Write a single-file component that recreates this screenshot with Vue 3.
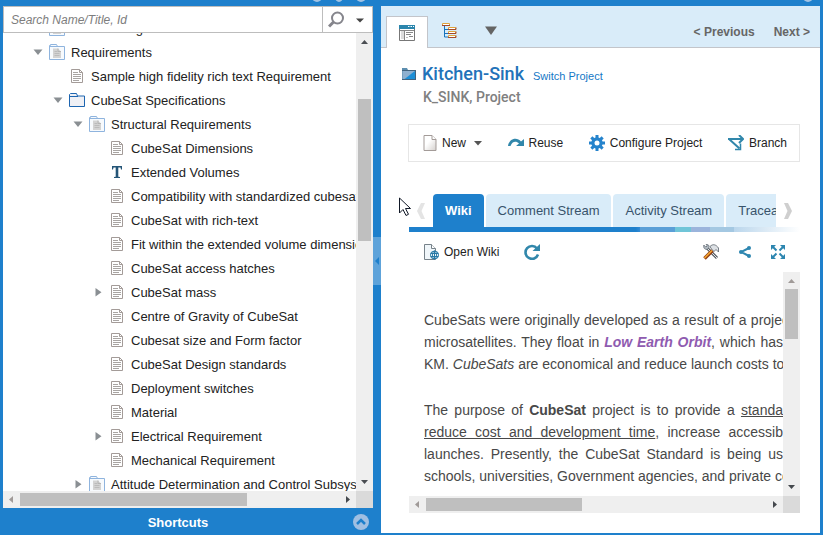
<script setup>
import { ref } from 'vue'

const rows = [
  { level: 0, icon: 'docfolder', text: 'User Testing' },
  { level: 0, icon: 'docfolder', text: 'Requirements', arrow: 'down' },
  { level: 1, icon: 'doc', text: 'Sample high fidelity rich text Requirement' },
  { level: 1, icon: 'folder', text: 'CubeSat Specifications', arrow: 'down' },
  { level: 2, icon: 'docfolder', text: 'Structural Requirements', arrow: 'down' },
  { level: 3, icon: 'doc', text: 'CubeSat Dimensions' },
  { level: 3, icon: 'letter', text: 'Extended Volumes' },
  { level: 3, icon: 'doc', text: 'Compatibility with standardized cubesat' },
  { level: 3, icon: 'doc', text: 'CubeSat with rich-text' },
  { level: 3, icon: 'doc', text: 'Fit within the extended volume dimensions' },
  { level: 3, icon: 'doc', text: 'CubeSat access hatches' },
  { level: 3, icon: 'doc', text: 'CubeSat mass', arrow: 'right' },
  { level: 3, icon: 'doc', text: 'Centre of Gravity of CubeSat' },
  { level: 3, icon: 'doc', text: 'Cubesat size and Form factor' },
  { level: 3, icon: 'doc', text: 'CubeSat Design standards' },
  { level: 3, icon: 'doc', text: 'Deployment switches' },
  { level: 3, icon: 'doc', text: 'Material' },
  { level: 3, icon: 'doc', text: 'Electrical Requirement', arrow: 'right' },
  { level: 3, icon: 'doc', text: 'Mechanical Requirement' },
  { level: 2, icon: 'docfolder', text: 'Attitude Determination and Control Subsystem', arrow: 'right' }
]
const tabs = ['Wiki', 'Comment Stream', 'Activity Stream', 'Traceability']
const active = ref('Wiki')
const query = ref('')
</script>

<template>
  <svg class="defs" aria-hidden="true">
    <linearGradient id="paper" x1="0" y1="0" x2="1" y2="1"><stop offset=".4" stop-color="#fff" /><stop offset="1" stop-color="#d4d0cd" /></linearGradient>
    <symbol id="doc" viewBox="0 0 16 16">
      <path d="M2.500 1.500h8l3 3v10h-11z" fill="#fff" stroke="#a39b98" />
      <path d="M10.500 1.500v3h3" fill="none" stroke="#a39b98" />
      <path d="M4 4.500h5M4 6.500h8M4 8.500h8M4 10.500h8M4 12.500h6" stroke="#a8a4a2" />
    </symbol>
    <symbol id="docfolder" viewBox="0 0 16 16">
      <path d="M.5 15.500v-14h1v-1h6l1 2h7v13z" fill="#f7fafd" stroke="#8fb4de" />
      <path d="M1 2.500h8" stroke="#8fb4de" />
      <path d="M4 4.500h5l3 3v6.500h-8z" fill="#d3d3d3" />
      <path d="M5.500 7.500h3M5.500 9.500h5M5.500 11.500h5" stroke="#bbb" />
      <path d="M9 4.500v3h3" fill="none" stroke="#b5b5b5" />
    </symbol>
    <symbol id="folder" viewBox="0 0 16 16">
      <path d="M.5 14.500v-12l1-1h6l1 2.500h7v10.500z" fill="#eff0f5" stroke="#1d65b0" />
      <path d="M1 4.500h8" stroke="#1d65b0" />
    </symbol>
    <symbol id="letter" viewBox="0 0 16 16">
      <path d="M3 2h10v3.500h-1l-.5-2H9.300v9.200l1.700.3v1H5v-1l1.700-.3V3.500H4.500l-.5 2H3z" fill="#245577" />
    </symbol>
  </svg>

  <div class="app">
    <div class="strip">
      <span class="dot"></span><span class="dot small"></span><span class="dot"></span>
      <span class="dot last"></span>
    </div>

    <aside class="side">
      <form class="search" @submit.prevent>
        <input v-model="query" type="text" placeholder="Search Name/Title, Id" aria-label="Search Name/Title, Id">
        <button type="submit" aria-label="Search">
          <svg width="36" height="18" viewBox="0 0 36 18">
            <circle cx="9.500" cy="7" r="5.500" fill="none" stroke="#85858c" stroke-width="2" />
            <path d="M5.500 11L1 15.500" stroke="#85858c" stroke-width="3" />
            <path d="M28 7.500h8l-4 4z" fill="#444" />
          </svg>
        </button>
      </form>
      <div class="scroller">
        <ul class="tree">
          <li v-for="r in rows" :key="r.text" :class="'l' + r.level">
            <svg class="arrow" width="10" height="10" viewBox="0 0 10 10">
              <path v-if="r.arrow === 'down'" d="M.5 2.500h9L5 8z" fill="#8a8f93" />
              <path v-if="r.arrow === 'right'" d="M2.500 1v8.500L8.500 5.200z" fill="#8a8f93" />
            </svg>
            <svg width="16" height="16"><use :href="'#' + r.icon" /></svg>
            <span>{{ r.text }}</span>
          </li>
        </ul>
        <div class="bar v">
          <svg width="17" height="17"><path d="M5 11h7L8.500 7z" fill="#4a4d52" /></svg>
          <div class="track tree-v"><i></i></div>
          <svg width="17" height="17"><path d="M5 6h7L8.500 10z" fill="#4a4d52" /></svg>
        </div>
        <div class="bar h">
          <svg width="17" height="17"><path d="M10 5v7L6 8.500z" fill="#a09a98" /></svg>
          <div class="track tree-h"><i></i></div>
          <svg width="17" height="17"><path d="M7 5v7l4-3.500z" fill="#44484d" /></svg>
        </div>
        <div class="corner"></div>
      </div>
      <button class="shortcuts" type="button">
        <span>Shortcuts</span>
        <svg width="16" height="16" viewBox="0 0 16 16"><circle cx="8" cy="8" r="8" fill="#a0bfe2" /><path d="M4 10l4-4 4 4" fill="none" stroke="#1e80cc" stroke-width="2.500" /></svg>
      </button>
    </aside>

    <div class="gutter">
      <button type="button" aria-label="Collapse panel">
        <svg width="8" height="10"><path d="M6 1v8L2 5z" fill="#1e80cc" /></svg>
      </button>
    </div>

    <main class="main">
      <nav class="views">
        <button class="view on" type="button" aria-label="Overview">
          <svg width="16" height="16" viewBox="0 0 16 16">
            <path d="M.5 1v14.500h15V1z" fill="#fff" stroke="#777" /><path d="M0 0h16v4H0z" fill="#2b86ad" />
            <path d="M9 1.500h1.500M11.500 1.500H13M14 1.500h1" stroke="#fff" />
            <path d="M2 6h3v8H2z" fill="#ddd" /><path d="M5.500 5v10M1 5.500h14M7 7.500h7M7 9.500h5M10 11.500h4" stroke="#888" /><path d="M7 12.500h2" stroke="#bbb" />
          </svg>
        </button>
        <button class="view" type="button" aria-label="Tree view">
          <svg width="16" height="16" viewBox="0 0 16 16">
            <path d="M3.500 3v11h4M3.500 6.500h4M3.500 10.500h4" fill="none" stroke="#1673bd" />
            <path d="M1.500.5h7v2h-7zM7.500 4.500h7v2h-7zM7.500 8.500h7v2h-7zM7.500 12.500h7v2h-7z" fill="#fff" stroke="#e0a33c" />
            <path d="M1 2.500h8M7 6.500h8v-2M7 10.500h8v-2M7 14.500h8v-2" fill="none" stroke="#a34a2c" />
          </svg>
        </button>
        <button class="view" type="button" aria-label="More views">
          <svg width="14" height="12"><path d="M1 1.500h12L7 10z" fill="#646464" /></svg>
        </button>
        <a class="step" href="#">&lt; Previous</a>
        <a class="step" href="#">Next &gt;</a>
      </nav>

      <header class="head">
        <div class="title">
          <svg width="14" height="14" viewBox="0 0 14 14"><path d="M0 1h5l1 2h7.500v9.500H0z" fill="#5d8eaf" /><path d="M.5 3.500h12.500v8.500H.5z" fill="#8fb0cf" /><path d="M13.500 3.500v9H2z" fill="#1d8fd6" /><path d="M0 12.500h14M13.500 3v9M0 3.500h14" stroke="#43637d" /></svg>
          <h1>Kitchen-Sink</h1>
          <a href="#">Switch Project</a>
        </div>
        <p>K_SINK, Project</p>
      </header>

      <div class="actions">
        <button type="button">
          <svg width="14" height="16"><path d="M1 .5h8l4 4v11H1z" fill="url(#paper)" stroke="#a39b98" /><path d="M9 .5v4h4" fill="#fff" stroke="#a39b98" /></svg>
          New
          <svg class="caret" width="8" height="5"><path d="M0 0h8L4 4.500z" fill="#555" /></svg>
        </button>
        <button type="button">
          <svg width="16" height="16" viewBox="0 0 16 16"><path d="M0 11C1 3.500 9 1.500 13 6.500L16 4v7H8l3-2.500C8 5.500 4 6.500 2.500 11z" fill="#3187ab" /></svg>
          Reuse
        </button>
        <button type="button">
          <svg width="16" height="16" viewBox="-8 -8 16 16"><g fill="#2583cc"><path v-for="n in 4" :key="n" d="M-1.500-8h3v16h-3z" :transform="'rotate(' + n * 45 + ')'" /><circle r="5.700" /></g><circle r="2.500" fill="#fff" /></svg>
          Configure Project
        </button>
        <button type="button">
          <svg width="16" height="16" viewBox="0 0 16 16"><path d="M0 4h14M1 4l10.500 9.500M11 0l4 4-4 4" fill="none" stroke="#3187ab" stroke-width="2" /><path d="M12.500 8.500v6H7" fill="none" stroke="#3187ab" stroke-width="1.500" /></svg>
          Branch
        </button>
      </div>

      <div class="tabrow">
        <button class="chev" type="button" aria-label="Scroll tabs left"><svg width="10" height="16"><path d="M5 0h4L5.500 8 9 16H5L1 8z" fill="#e4e4e4" /></svg></button>
        <div class="tabs" role="tablist">
          <button v-for="t in tabs" :key="t" type="button" role="tab" :aria-selected="active === t" :class="{ on: active === t }" @click="active = t">{{ t }}</button>
        </div>
        <button class="chev" type="button" aria-label="Scroll tabs right"><svg width="10" height="16"><path d="M1 0h4l4 8-4 8H1l3.500-8z" fill="#cfcfcf" /></svg></button>
      </div>
      <div class="rule"></div>

      <div class="tools">
        <button type="button">
          <svg width="15" height="16" viewBox="0 0 15 16"><path d="M.5.5h7l4 4v11H.5z" fill="#f0f6fa" stroke="#77828a" /><path d="M7.500.5v4h4" fill="#fff" stroke="#77828a" /><circle cx="10.500" cy="11" r="4" fill="#fff" stroke="#2779a6" /><ellipse cx="10.500" cy="11" rx="2" ry="4" fill="none" stroke="#2779a6" /><path d="M6.500 9.500h8M6.500 12.500h8M10.500 7v8" stroke="#2779a6" /></svg>
          Open Wiki
        </button>
        <button type="button" aria-label="Refresh">
          <svg width="16" height="16" viewBox="0 0 16 16"><path d="M13 4.500A6.400 6.400 0 1 0 14 10.500" fill="none" stroke="#3187ab" stroke-width="2.600" /><path d="M16 0v7H8.500z" fill="#3187ab" /></svg>
        </button>
        <button class="push" type="button" aria-label="Configure">
          <svg width="16" height="16" viewBox="0 0 16 16"><path d="M3 3l11 11" stroke="#5b6066" stroke-width="3" /><path d="M4 4l10 10" stroke="#e4e7ea" /><path d="M.8 1l2 2 1.500-1L3 0c3 0 4 3 2 5C3 6 0 5 .8 1z" fill="#b4bdc5" stroke="#59616a" stroke-width=".7" /><path d="M1.500 14.500l8-8" stroke="#8e3d16" stroke-width="3.600" /><path d="M1.500 14L9 6.500" stroke="#f5a52f" stroke-width="1.600" /><path d="M7 2.500c3-3 6-2 8.500 1.500V8l-2.500-2.500L11 7.500 8.500 5z" fill="#dde1e5" stroke="#59616a" stroke-width=".8" /></svg>
        </button>
        <button type="button" aria-label="Share">
          <svg width="12" height="12" viewBox="0 0 12 12"><path d="M10 2L2 6l8 4" fill="none" stroke="#2d86b0" stroke-width="2" /><g fill="#2d86b0"><circle cx="2" cy="6" r="2" /><circle cx="10" cy="2" r="2" /><circle cx="10" cy="10" r="2" /></g></svg>
        </button>
        <button type="button" aria-label="Full screen">
          <svg width="14" height="14" viewBox="0 0 14 14"><path d="M0 0h5L0 5zM14 0v5L9 0zM0 14V9l5 5zM14 14H9l5-5z" fill="#2d86b0" /><path d="M1 1l4.500 4.500M13 1L8.500 5.500M1 13l4.500-4.500M13 13L8.500 8.500" stroke="#2d86b0" stroke-width="2" /></svg>
        </button>
      </div>

      <div class="scroller wiki">
        <article>
          <p>
            <span class="past">CubeSats were originally developed as a result of a projec</span>
            <span>microsatellites. They float in <a href="#">Low Earth Orbit</a>, which has</span>
            <span>KM. <em>CubeSats</em> are economical and reduce launch costs to</span>
          </p>
          <p>
            <span>The purpose of <b>CubeSat</b> project is to provide a <u>standa</u></span>
            <span><u>reduce cost and development time</u>, increase accessib</span>
            <span>launches. Presently, the CubeSat Standard is being us</span>
            <span class="past">schools, universities, Government agencies, and private co</span>
          </p>
        </article>
        <div class="bar v">
          <svg width="17" height="17"><path d="M5 11h7L8.500 7z" fill="#a09a98" /></svg>
          <div class="track wiki-v"><i></i></div>
          <svg width="17" height="17"><path d="M5 6h7L8.500 10z" fill="#44484d" /></svg>
        </div>
        <div class="bar h">
          <svg width="17" height="17"><path d="M10 5v7L6 8.500z" fill="#a09a98" /></svg>
          <div class="track wiki-h"><i></i></div>
          <svg width="17" height="17"><path d="M7 5v7l4-3.500z" fill="#44484d" /></svg>
        </div>
        <div class="corner"></div>
      </div>
    </main>

    <svg class="pointer" width="13" height="20" viewBox="0 0 13 20"><path d="M.5 1v15l3.500-3.500 3 6 2.500-1.200-3-5.800h5z" fill="#fff" stroke="#111827" /></svg>
  </div>
</template>

<style>
body { margin: 0; background: #1e80cc; }
</style>

<style scoped>
.defs { position: absolute; width: 0; height: 0; }
.app {
  position: relative;
  display: grid;
  grid-template: 6px minmax(0, 1fr) / minmax(0, 370fr) 8px minmax(0, 439fr);
  box-sizing: border-box;
  height: 100vh;
  padding: 0 3px;
  overflow: hidden;
  background: #1e80cc;
  font-family: "Liberation Sans", Arial, sans-serif;
  font-size: 12px;
  color: #222;
}
button { padding: 0; border: 0; background: none; font: inherit; color: inherit; }
a { text-decoration: none; }
svg { flex: none; display: block; }
.strip { grid-column: 1 / -1; display: flex; align-items: flex-end; gap: 13px; padding: 0 7px 4px 309px; height: 2px; overflow: hidden; }
.dot { flex: none; width: 10px; height: 10px; border-radius: 50%; background: #a3c3e4; }
.dot.small { width: 8px; }
.dot.last { margin-left: auto; }

.side { display: flex; flex-direction: column; min-height: 0; }
.search { display: flex; box-sizing: border-box; height: 27px; border: 1px solid #bdbdbd; background: #fff; }
.search input { flex: 1; min-width: 0; padding: 0 7px; border: 0; outline: 0; background: none; font: italic 12px "Liberation Sans", Arial, sans-serif; }
.search input::placeholder { color: #7d7d7d; opacity: 1; }
.search button { display: flex; align-items: center; width: 50px; padding-left: 5px; border-left: 1px solid #bdbdbd; }

.scroller { flex: 1; display: grid; grid-template: minmax(0, 1fr) 17px / minmax(0, 1fr) 17px; min-height: 0; background: #fff; }
.tree { margin: 0; padding: 0; overflow: hidden; list-style: none; font-size: 13px; }
.tree li { display: flex; align-items: center; gap: 6px; height: 24px; padding-left: 30px; white-space: nowrap; }
.tree li:first-child { margin-top: -17px; }
.tree .l1 { padding-left: 50px; }
.tree .l2 { padding-left: 70px; }
.tree .l3 { padding-left: 90px; }
.bar { display: flex; background: #efefef; }
.bar.v { flex-direction: column; }
.track { flex: 1; display: grid; min-width: 0; min-height: 0; }
.track i { background: #bfbfbf; }
.v .track { padding: 0 2px; }
.h .track { padding: 2px 0; }
.tree-v { grid-template-rows: 49fr 142fr 233fr; }
.tree-v i { grid-row: 2; }
.tree-h { grid-template-columns: 227fr 92fr; }
.wiki-v { grid-template-rows: 50fr 140fr; }
.wiki-h { grid-template-columns: 156fr 184fr; }
.corner { background: #dadada; }
.shortcuts { display: flex; align-items: center; height: 27px; padding: 0 4px 0 0; color: #fff; font-weight: bold; font-size: 13px; }
.shortcuts span { flex: 1; padding-top: 2px; text-align: center; }

.gutter { display: flex; align-items: center; }
.gutter button { width: 8px; height: 48px; margin-bottom: 19px; background: #5ea3da; }

.main { display: flex; flex-direction: column; min-height: 0; margin-bottom: 2px; padding-bottom: 20px; box-sizing: border-box; background: #fff; }
.views { display: flex; align-items: flex-end; height: 41px; padding: 0 10px 0 5px; border-bottom: 1px solid #c3c5ca; background: #d9ecf9; }
.view { display: flex; align-items: center; justify-content: center; width: 42px; height: 32px; box-sizing: border-box; }
.view.on { margin-bottom: -1px; border: 1px solid #c3c5ca; border-bottom: 0; background: #fff; }
.step { margin-bottom: 8px; font-weight: bold; line-height: 14px; color: #666; }
.step:first-of-type { margin: 0 19px 8px auto; }

.head { padding: 14px 21px 0; font-family: Roboto, sans-serif; }
.title { display: flex; align-items: center; gap: 6px; }
.title h1 { margin: 0; font-size: 18px; line-height: 24px; font-weight: 500; color: #2272b9; }
.title a { margin: 4px 0 0 3px; font: 11px/14px "Liberation Sans", Arial, sans-serif; color: #1478c6; }
.head p { margin: 2px 0 0 21px; font-size: 14px; line-height: 18px; font-weight: 500; color: #808080; }

.actions { display: flex; align-items: center; justify-content: space-between; box-sizing: border-box; height: 38px; margin: 18px 20px 0 27px; padding: 0 12px 0 14px; border: 1px solid #e6e6e6; }
.actions button, .tools button { display: flex; align-items: center; gap: 5px; }
.caret { margin-left: 3px; }
.tabrow { display: flex; height: 33px; margin: 32px 20px 0 28px; }
.chev { display: flex; align-items: center; justify-content: center; width: 24px; }
.tabs { flex: 1; display: flex; gap: 2px; min-width: 0; overflow: hidden; }
.tabs button { flex: none; padding: 0 12px; border-radius: 4px 4px 0 0; background: #d9ecf9; color: #38536b; font-size: 13px; white-space: nowrap; }
.tabs .on { background: #1e80cc; color: #fff; font-weight: bold; }
.rule { height: 5px; margin: 0 20px 0 28px; background: linear-gradient(90deg, #1e80cc 58%, #3089d4 59%, #5a9fd7 59% 68%, #70c5d8 68% 72%, #9bb4dc 72% 77%, #a4c8e2 77% 83%, #bad6ec 83%, #fff); }
.tools { display: flex; align-items: center; gap: 20px; height: 40px; margin: 0 35px 0 43px; }
.tools button:nth-child(2) { margin-left: 5px; }
.push { margin-left: auto; }

.wiki { margin: 0 20px 0 28px; }
article { padding: 37px 0 0 15px; overflow: hidden; font-size: 14px; line-height: 22px; color: #484848; }
article p { margin: 0 0 24px; }
article span { display: block; text-align: justify; text-align-last: justify; white-space: nowrap; }
article .past { margin-right: -6px; }
article a { font-weight: bold; font-style: italic; color: #8f5bb0; }
.pointer { position: absolute; left: 399px; top: 197px; }
</style>
